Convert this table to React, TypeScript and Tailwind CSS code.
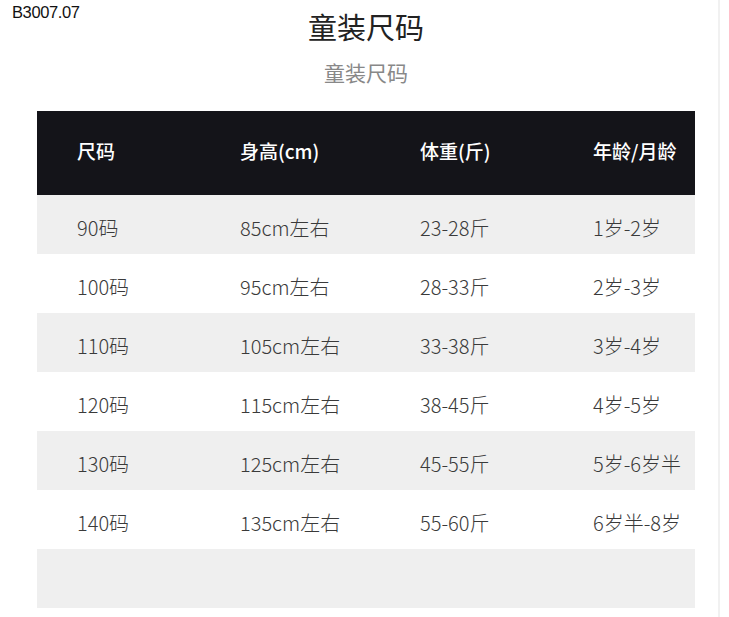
import React from "react";

const rows = [
  ["90码", "85cm左右", "23-28斤", "1岁-2岁"],
  ["100码", "95cm左右", "28-33斤", "2岁-3岁"],
  ["110码", "105cm左右", "33-38斤", "3岁-4岁"],
  ["120码", "115cm左右", "38-45斤", "4岁-5岁"],
  ["130码", "125cm左右", "45-55斤", "5岁-6岁半"],
  ["140码", "135cm左右", "55-60斤", "6岁半-8岁"],
  ["", "", "", ""],
];

const cjk = { fontFamily: '"Noto Sans CJK SC", "Noto Sans", sans-serif' };

export default function App() {
  return (
    <div className="relative flex w-[729px] h-[617px] bg-white overflow-hidden" style={cjk}>
      <div
        className="absolute left-[12px] top-[2px] text-[16.5px] leading-[20px] tracking-[-0.4px] text-[#111]"
        style={{ fontFamily: '"Liberation Sans", Arial, sans-serif' }}
      >
        B3007.07
      </div>
      <div className="w-[718px] pl-[37px] pt-[9px]">
        <div className="w-[658px] flex flex-col items-center">
          <div className="text-[29px] leading-[34px] text-[#222]">童装尺码</div>
          <div className="mt-[17px] text-[21px] leading-[24px] text-[#888]">童装尺码</div>
        </div>
        <div className="mt-[27px] w-[658px]">
          <div className="grid grid-cols-[163px_180px_173px_1fr] pl-[40px] h-[84px] items-center bg-[#141419] text-white text-[19px] font-medium">
            <div className="pb-[3px]">尺码</div>
            <div className="pb-[3px]">身高(cm)</div>
            <div className="pb-[3px]">体重(斤)</div>
            <div className="pb-[3px]">年龄/月龄</div>
          </div>
          {rows.map((r, i) => (
            <div
              key={i}
              className={`grid grid-cols-[163px_180px_173px_1fr] pl-[40px] h-[59px] items-center text-[20px] font-light text-[#3a3a3a] ${i % 2 === 0 ? "bg-[#efefef]" : "bg-white"}`}
            >
              {r.map((c, j) => (
                <div key={j} className="pt-[6px]">{c}</div>
              ))}
            </div>
          ))}
        </div>
      </div>
      <div className="w-[2px] h-full bg-[#f1f1f1]" />
    </div>
  );
}
